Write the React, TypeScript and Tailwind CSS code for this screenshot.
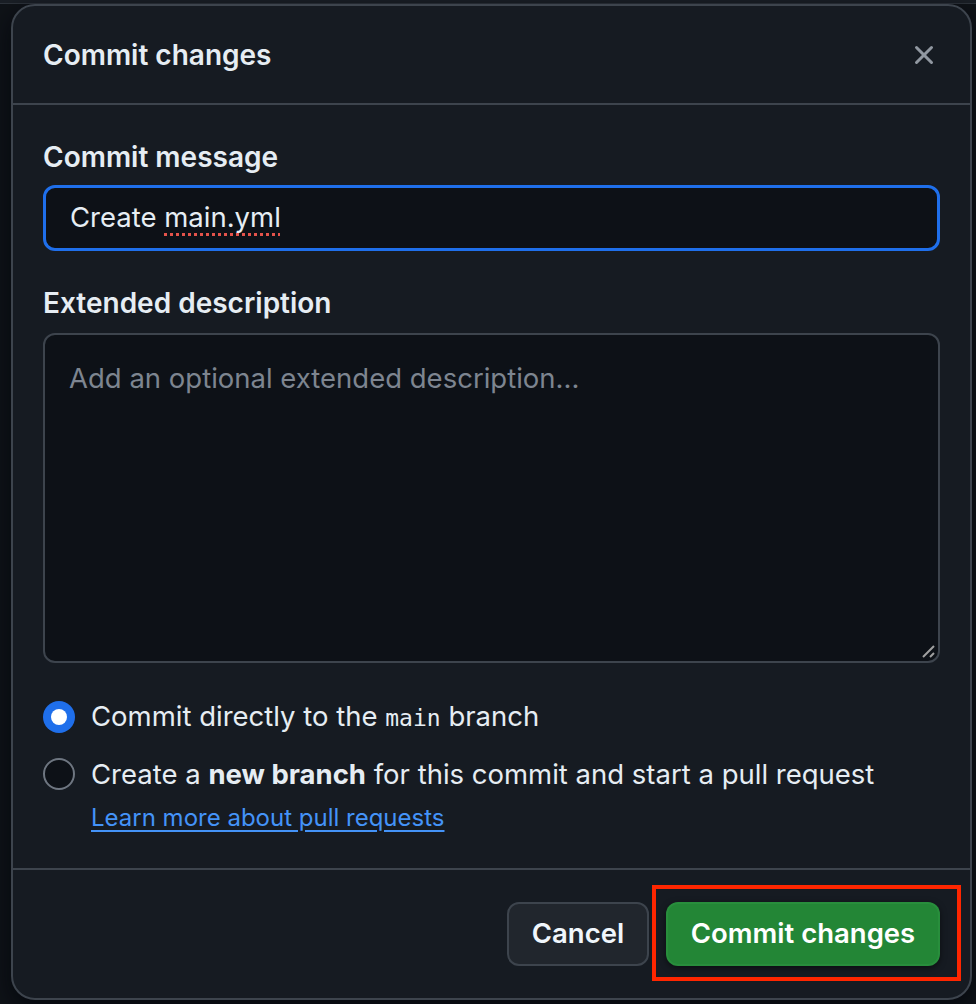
import { X } from "lucide-react";

function Radio({ checked }: { checked: boolean }) {
  if (checked) {
    return (
      <span className="flex h-[32px] w-[32px] shrink-0 items-center justify-center rounded-full bg-[#1f6feb]">
        <span className="h-[16px] w-[16px] rounded-full bg-white" />
      </span>
    );
  }
  return <span className="h-[32px] w-[32px] shrink-0 rounded-full border-2 border-[#6e7681] bg-[#0d1117]" />;
}

export default function App() {
  return (
    <div className="h-[1004px] w-[976px] overflow-hidden bg-[#0f1318] font-['Inter','Liberation_Sans',sans-serif] text-[#e6edf3]">
      <div className="h-[4px] border-b border-[#2d333b] bg-[#1a1f26]" />
      <div className="pl-[11px] pr-[4px]">
        <div className="flex h-[996px] w-[961px] flex-col overflow-hidden rounded-[24px] border-2 border-[#3d444d] bg-[#161b22] shadow-[0_8px_24px_rgba(1,4,9,0.75)]">
          {/* header */}
          <div className="flex h-[99px] shrink-0 items-center justify-between border-b-2 border-[#3d444d] pl-[30px] pr-[31px]">
            <h1 className="text-[28px] font-semibold">Commit changes</h1>
            <X className="text-[#9198a1]" size={30} strokeWidth={2.4} />
          </div>

          {/* body */}
          <div className="flex-1 px-[30px] pt-[33px]">
            <label className="block text-[28px] font-semibold leading-[39px]">Commit message</label>
            <div className="mt-[8px] flex h-[66px] items-center rounded-[12px] border-[3px] border-[#1f6feb] bg-[#0d1117] px-[24px] text-[27.5px]">
              <span>
                Create{" "}
                <span className="underline decoration-[#e5534b] decoration-dotted decoration-[3px] underline-offset-[6px]">
                  main.yml
                </span>
              </span>
            </div>

            <label className="mt-[33px] block text-[28px] font-semibold leading-[39px]">Extended description</label>
            <div className="relative mt-[10px] h-[330px] rounded-[12px] border-2 border-[#3d444d] bg-[#0d1117] px-[24px] pt-[24px]">
              <p className="text-[27.5px] leading-[39px] text-[#7d8590]">Add an optional extended description...</p>
              <svg className="absolute bottom-[2px] right-[2px]" width="16" height="16" viewBox="0 0 16 16">
                <path d="M3 14 L14 3 M10 14 L14 10" stroke="#a0a0a0" strokeWidth="2" />
              </svg>
            </div>

            <div className="mt-[31px] flex items-center gap-[16px] leading-[44px]">
              <Radio checked />
              <span className="text-[27.5px]">
                Commit directly to the{" "}
                <span className="font-['DejaVu_Sans_Mono','Liberation_Mono',monospace] text-[23px]">main</span> branch
              </span>
            </div>
            <div className="mt-[12px] flex gap-[16px]">
              <div className="flex h-[44px] items-center">
                <Radio checked={false} />
              </div>
              <div className="leading-[44px]">
                <div className="text-[27.5px]">
                  Create a <span className="font-bold">new branch</span> for this commit and start a pull request
                </div>
                <a className="text-[24px] text-[#4493f8] underline underline-offset-[4px]" href="#">
                  Learn more about pull requests
                </a>
              </div>
            </div>
          </div>

          {/* footer */}
          <div className="flex h-[130px] shrink-0 items-center justify-end gap-[17px] border-t-2 border-[#3d444d] pr-[30px]">
            <button className="h-[64px] w-[142px] rounded-[12px] border-2 border-[#3d444d] bg-[#21262d] text-[27.5px] font-semibold text-[#f0f6fc]">
              Cancel
            </button>
            <div className="relative">
              <button className="h-[64px] w-[274px] rounded-[12px] border-2 border-[#2f9a45]/40 bg-[#238636] text-[27.5px] font-semibold text-white shadow-[0_2px_6px_rgba(0,0,0,0.5)]">
                Commit changes
              </button>
              <div className="pointer-events-none absolute bottom-[-15px] left-[-14px] right-[-21px] top-[-17px] border-4 border-[#ff2600]" />
            </div>
          </div>
        </div>
      </div>
    </div>
  );
}
